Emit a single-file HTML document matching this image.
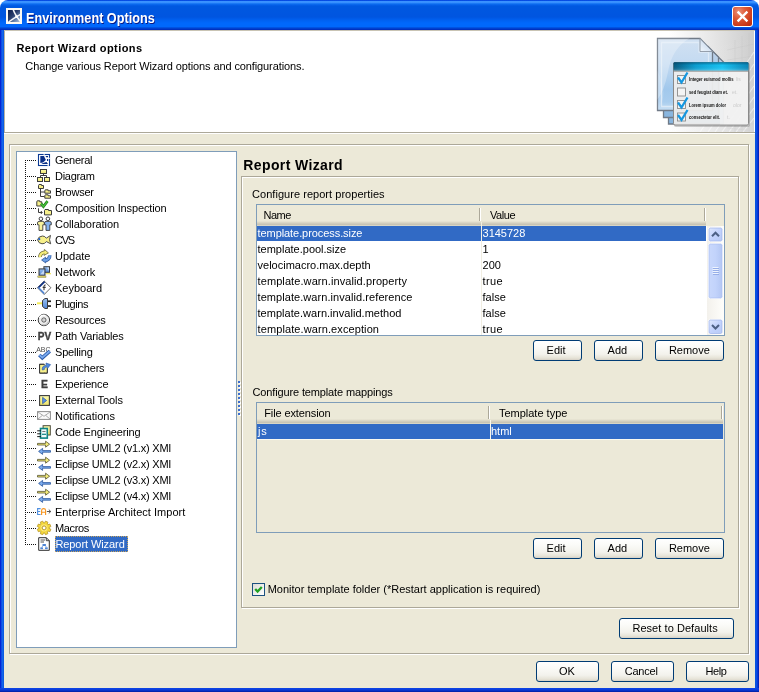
<!DOCTYPE html>
<html>
<head>
<meta charset="utf-8">
<title>Environment Options</title>
<style>
*{box-sizing:border-box;margin:0;padding:0}
html,body{width:759px;height:692px;overflow:hidden;background:#fff}
body{font-family:"Liberation Sans",sans-serif;font-size:11px;color:#000;position:relative}
.abs{position:absolute}
#win{position:absolute;left:0;top:0;width:759px;height:692px;overflow:hidden;will-change:transform}
.bl{position:absolute;top:30px;width:4px;height:662px}
#bb{position:absolute;left:0;top:688px;width:759px;height:4px;background:linear-gradient(to bottom,#0d46e6,#0a3ad8 50%,#001ea0 100%)}
#title{position:absolute;left:0;top:0;width:759px;height:30px;border-radius:8px 8px 0 0;
background:linear-gradient(to bottom,#0046e0 0,#0a50e6 0.8px,#3a92ff 1.4px,#3a92ff 2.4px,#1272f2 3.8px,#045fe8 5px,#0058e0 6.5px,#0055e0 17px,#0060f0 20px,#0068fc 23px,#0068fc 26.5px,#0048d6 28px,#0030c0 29.5px,#0030c0 30px)}
#ttext{position:absolute;left:26px;top:9.6px;color:#fff;font-weight:bold;font-size:14px;line-height:16px;text-shadow:1px 1px 0 #0a1883;white-space:nowrap;transform:scaleX(0.904);transform-origin:0 0}
#close{position:absolute;left:732px;top:6px;width:21px;height:21px;border:1px solid #fff;border-radius:3px;
background:radial-gradient(circle at 30% 25%,#e9917a 0%,#de5a37 35%,#c73314 80%,#b22a0c 100%)}
#client{position:absolute;left:4px;top:30px;width:751px;height:658px;background:#ece9d8}
#hdr{position:absolute;left:0;top:0;width:751px;height:102px;background:#fff}
#hsep{position:absolute;left:0;top:102px;width:751px;height:2px;background:linear-gradient(to bottom,#aca899 50%,#fff 50%)}
#hleft{position:absolute;left:0;top:0;width:751px;height:102px;border-left:1px solid #b5b2a4;border-top:1px solid #c9c4b4}
.t{position:absolute;white-space:nowrap;line-height:13px;font-size:11px}
.etch{position:absolute;border:1px solid #aca899;box-shadow:1px 1px 0 #fff, inset 1px 1px 0 #fff}
.btn{position:absolute;height:21px;border:1px solid #003c74;border-radius:3px;
background:linear-gradient(to bottom,#ffffff 0%,#fbfbf8 30%,#f3f2ec 70%,#e6e3d7 90%,#d6d0c5 100%)}
#tree{position:absolute;left:16px;top:151px;width:221px;height:497px;border:1px solid #7f9db9;background:#fff}
.ic{position:absolute;left:37px;width:16px;height:16px}
.hd{position:absolute;left:27px;width:10px;height:1px;background-image:linear-gradient(to right,#111 50%,transparent 50%);background-size:2px 1px}
#vd{position:absolute;left:25px;top:160px;width:1px;height:385px;background-image:linear-gradient(to bottom,#111 50%,transparent 50%);background-size:1px 2px}
.tbl{position:absolute;border:1px solid #7f9db9;overflow:hidden}
.th{position:absolute;top:0;height:21px;background:linear-gradient(to bottom,#ece9d8 0,#ece9d8 16px,#e0dccb 17px,#d6d2c2 18px,#cbc7b8 19px,#c5c2b2 20px,#ece9d8 21px)}
.hs{position:absolute;top:3px;width:2px;height:13px;border-left:1px solid #aca899;border-right:1px solid #fff}
.sel{position:absolute;background:#316ac5;height:15px}
</style>
</head>
<body>
<div id="win">
<div class="bl" style="left:0;background:linear-gradient(to right,#0019cf 0,#0831d9 25%,#166aee 50%,#0855dd 100%)"></div><div class="bl" style="left:755px;background:linear-gradient(to right,#0855dd 0,#0a4fe0 40%,#0831d9 70%,#001ea0 100%)"></div><div id="bb"></div>
<div id="title"></div>
<svg id="ticon" class="abs" style="left:6px;top:8px" width="16" height="16" viewBox="0 0 16 16"><defs><linearGradient id="tig" x1="0" y1="0" x2="1" y2="1"><stop offset="0" stop-color="#0b1a47"/><stop offset="0.45" stop-color="#2a3f6e"/><stop offset="0.75" stop-color="#6f8ab4"/><stop offset="1" stop-color="#a9bedb"/></linearGradient></defs><rect x="0" y="0" width="16" height="16" fill="#fbf8f2"/><rect x="2" y="2" width="12" height="12" fill="url(#tig)"/><path d="M7.2 1.5 Q9 7 14.5 13.5" stroke="#fff" stroke-width="1.5" fill="none" stroke-opacity="0.95"/><path d="M2.5 14 Q8 10 14.5 6.3" stroke="#fff" stroke-width="1.5" fill="none" stroke-opacity="0.95"/><circle cx="10.6" cy="8.6" r="1.3" fill="#fff"/></svg>
<div id="ttext">Environment Options</div>
<div id="close"><svg width="19" height="19" viewBox="0 0 19 19" style="position:absolute;left:0;top:0"><path d="M4.6 4.6 L14.4 14.4 M14.4 4.6 L4.6 14.4" stroke="#fff" stroke-width="2.3" stroke-linecap="butt"/></svg></div>
<div id="client"><div id="hdr"></div><div id="hleft"></div><div id="hsep"></div></div>
<svg class="abs" style="left:620px;top:30px" width="135" height="102" viewBox="620 30 135 102">
<defs>
<linearGradient id="bgg" x1="0" y1="0" x2="1" y2="0"><stop offset="0" stop-color="#fff"/><stop offset="0.25" stop-color="#fff"/><stop offset="0.6" stop-color="#e9e9e9"/><stop offset="1" stop-color="#cccccc"/></linearGradient>
<linearGradient id="bgv" x1="0" y1="0" x2="0" y2="1"><stop offset="0" stop-color="#fff" stop-opacity="0"/><stop offset="0.75" stop-color="#fff" stop-opacity="0.08"/><stop offset="1" stop-color="#fff" stop-opacity="0.2"/></linearGradient>
<linearGradient id="pg" x1="0" y1="0" x2="0" y2="1"><stop offset="0" stop-color="#d2e1f2"/><stop offset="0.35" stop-color="#c3daf1"/><stop offset="0.7" stop-color="#a1c8ec"/><stop offset="0.88" stop-color="#a9cdee"/><stop offset="1" stop-color="#c9e0f4"/></linearGradient>
<linearGradient id="pg2" x1="0" y1="0" x2="0" y2="1"><stop offset="0" stop-color="#c1d5ec"/><stop offset="1" stop-color="#86b4de"/></linearGradient>
<linearGradient id="cy" x1="0" y1="0" x2="1" y2="0"><stop offset="0" stop-color="#075a80"/><stop offset="0.3" stop-color="#0b9fd2"/><stop offset="0.65" stop-color="#19c4f4"/><stop offset="1" stop-color="#0a86b8"/></linearGradient>
<linearGradient id="cyv" x1="0" y1="0" x2="0" y2="1"><stop offset="0" stop-color="#003a5a" stop-opacity="0.55"/><stop offset="0.35" stop-color="#003a5a" stop-opacity="0"/><stop offset="0.8" stop-color="#fff" stop-opacity="0.1"/><stop offset="1" stop-color="#fff" stop-opacity="0.3"/></linearGradient>
<linearGradient id="fold" x1="0" y1="1" x2="1" y2="0"><stop offset="0" stop-color="#f2f7fc"/><stop offset="1" stop-color="#b5cde8"/></linearGradient>
<clipPath id="p1c"><path d="M657.5 38.5 H700 L712.5 51.5 V110.5 H657.5 Z"/></clipPath>
</defs>
<rect x="640" y="30" width="114" height="102" fill="url(#bgg)"/>
<g stroke="#fff" stroke-opacity="0.5" stroke-width="1.2">
<path d="M715 132 L754 75 M722 132 L754 86 M729 132 L754 97 M736 132 L754 108 M743 132 L754 118 M708 132 L754 64 M700 132 L754 52 M720 30 L754 30"/>
</g>
<g stroke="#c4c4c4" stroke-opacity="0.5" stroke-width="0.6">
<path d="M727 50 L754 44 M727 60 L754 56 M727 70 L754 68 M735 40 V132 M742 36 V132 M749 33 V132 M727 122 L754 124 M727 128 L754 131"/>
</g>
<rect x="640" y="30" width="114" height="102" fill="url(#bgv)"/>
<rect x="754" y="30" width="1" height="102" fill="#fff"/>
<!-- page 3 -->
<path d="M668.5 53 H714 L723.5 62 V124 H668.5 Z" fill="url(#pg2)" stroke="#707a87" stroke-width="1.3"/>
<!-- page 2 -->
<path d="M663.5 46.5 H708 L718.5 57 V117.5 H663.5 Z" fill="url(#pg2)" stroke="#707a87" stroke-width="1.3"/>
<!-- page 1 -->
<path d="M657.5 38.5 H700 L712.5 51.5 V110.5 H657.5 Z" fill="url(#pg)" stroke="#707a87" stroke-width="1.3"/>
<g clip-path="url(#p1c)">
<path d="M661.5 42.5 H699 V52 H708.5 V106.5 H661.5 Z" fill="none" stroke="#e4edf8" stroke-opacity="0.8" stroke-width="1.3"/>
<path d="M657 38 H690 Q672 48 668 72 Q664 92 657 100 Z" fill="#fff" fill-opacity="0.28"/>
<path d="M657 70 Q670 95 657 111 Z" fill="#fff" fill-opacity="0.15"/>
</g>
<path d="M700 38.5 L700 51.5 L712.5 51.5 Z" fill="url(#fold)" stroke="#8c96a3" stroke-width="0.9"/>
<!-- shadow of panel -->
<rect x="674" y="63" width="76" height="64" rx="2" fill="#444" fill-opacity="0.25"/>
<!-- panel -->
<rect x="673.5" y="62.5" width="75" height="62.5" rx="1.5" fill="#f1f1f1" fill-opacity="0.93" stroke="#8a8a8a" stroke-width="1"/>
<rect x="720" y="71" width="28" height="53.5" fill="#fff" fill-opacity="0.25"/>
<rect x="673.5" y="62.2" width="75" height="8.6" rx="1.2" fill="url(#cy)"/>
<rect x="673.5" y="62.2" width="75" height="8.6" rx="1.2" fill="url(#cyv)"/>
<path d="M673.5 71.2 H748.5" stroke="#7d7d7d" stroke-width="0.8"/>
<!-- checkboxes -->
<g fill="#f4f4f4" stroke="#8c8c8c" stroke-width="0.9">
<rect x="677.5" y="75.5" width="8" height="8"/><rect x="677.5" y="88" width="8" height="8"/><rect x="677.5" y="100.5" width="8" height="8"/><rect x="677.5" y="113" width="8" height="8"/>
</g>
<g fill="none" stroke="#1597e0" stroke-width="2.3" stroke-linejoin="miter">
<path d="M678 77.5 L681.5 82.5 L687.5 72.5"/><path d="M678 102.5 L681.5 107.5 L687.5 97.5"/><path d="M678 115 L681.5 120 L687.5 110"/>
</g>
<g font-family="Liberation Sans" font-weight="bold" font-size="5.2" fill="#111">
<text x="689" y="81.3" textLength="44.5" lengthAdjust="spacingAndGlyphs">Integer euismod mollis</text>
<text x="689" y="93.8" textLength="39" lengthAdjust="spacingAndGlyphs">sed feugiat diam et.</text>
<text x="689" y="106.5" textLength="37" lengthAdjust="spacingAndGlyphs">Lorem ipsum dolor</text>
<text x="689" y="119" textLength="31" lengthAdjust="spacingAndGlyphs">consectetur elit.</text>
</g>
<g font-family="Liberation Sans" font-size="5" fill="#bbb" fill-opacity="0.7">
<text x="736" y="81">lis</text><text x="732" y="94">et.</text><text x="733" y="106.5">olor</text><text x="727" y="119">t.</text>
</g>
</svg>
<div style="position:absolute;left:4px;top:30px;width:751px;height:1px;background:#c9c4b4"></div>
<div class="etch" style="left:9px;top:144px;width:740px;height:510px"></div>
<div id="tree"></div><div id="vd"></div>
<div class="hd" style="top:160px"></div><div class="ic" style="top:152px"><svg width="16" height="16" viewBox="0 0 16 16" style="overflow:visible;display:block"><defs><linearGradient id="yg" x1="0" y1="0" x2="0" y2="1"><stop offset="0" stop-color="#fffdb0"/><stop offset="1" stop-color="#ece26a"/></linearGradient><linearGradient id="bg2" x1="0" y1="0" x2="0" y2="1"><stop offset="0" stop-color="#9cc2f2"/><stop offset="1" stop-color="#4f86d6"/></linearGradient></defs><rect x="1.5" y="2.5" width="11" height="11" fill="#fff" stroke="#0c3a94" stroke-width="1.1"/><path d="M3.3 4 H7 L8.8 8 L6 10.5 L3.3 11 Z" fill="#0b2f86"/><path d="M8.5 4 H11 V5.2 H9.3 Z" fill="#0b2f86"/><path d="M5 11.5 Q8 10.3 9.5 10 L11 12 H4.5 Z" fill="#0b2f86"/><rect x="10" y="7" width="1.2" height="2" fill="#0b2f86"/><path d="M6.5 2 H7.8 M12 5.8 V7 M10.6 13.6 H11.8" stroke="#fff" stroke-width="1.6"/></svg></div>
<div class="hd" style="top:176px"></div><div class="ic" style="top:168px"><svg width="16" height="16" viewBox="0 0 16 16" style="overflow:visible;display:block"><path d="M6.5 6 V7.5 M3.5 9 V7.5 H9.5 V9" stroke="#3c3c3c" fill="none" stroke-width="1"/><rect x="3.5" y="1.5" width="6" height="4" fill="url(#yg)" stroke="#3c3c3c" stroke-width="1"/><rect x="0.5" y="9.5" width="5" height="4" fill="url(#yg)" stroke="#3c3c3c" stroke-width="1"/><rect x="7.5" y="9.5" width="5" height="4" fill="url(#yg)" stroke="#3c3c3c" stroke-width="1"/></svg></div>
<div class="hd" style="top:192px"></div><div class="ic" style="top:184px"><svg width="16" height="16" viewBox="0 0 16 16" style="overflow:visible;display:block"><path d="M3.5 5 V12.5 H7.5 M3.5 8 H7.5" stroke="#3c3c3c" fill="none" stroke-width="1"/><path d="M1.5 1.5 V4.5 H6.5 V1.5 H4.5 V0.5 H2 L1.5 1.5 Z" fill="#f7f08a" stroke="#3c3c3c" stroke-width="1"/><path d="M7.8 6.8 V9.2 H13.5 V6.8 H11.15 V5.8 H8.3 L7.8 6.8 Z" fill="#f7f08a" stroke="#3c3c3c" stroke-width="1"/><path d="M7.8 11.8 V14.200000000000001 H13.5 V11.8 H11.15 V10.8 H8.3 L7.8 11.8 Z" fill="#f7f08a" stroke="#3c3c3c" stroke-width="1"/></svg></div>
<div class="hd" style="top:208px"></div><div class="ic" style="top:200px"><svg width="16" height="16" viewBox="0 0 16 16" style="overflow:visible;display:block"><path d="M-0.19999999999999996 1.8 V6.0 H4.8 V1.8 H2.8 V0.8 H0.30000000000000004 L-0.19999999999999996 1.8 Z" fill="#f7f08a" stroke="#3c3c3c" stroke-width="1"/><path d="M4.1 3.6 L6.4 6.6 L10.5 1.1" stroke="#1f7a1a" stroke-width="2.6" fill="none"/><path d="M4.1 3.6 L6.4 6.6 L10.5 1.1" stroke="#46c23a" stroke-width="1.3" fill="none"/><path d="M1.5 8.3 V12.5 H5 M3.8 11 L5.3 12.5 L3.8 14" stroke="#3c3c3c" fill="none" stroke-width="1"/><path d="M7.5 10.5 V14.9 H14.5 V10.5 H11.5 V9.5 H8 L7.5 10.5 Z" fill="#f7f08a" stroke="#3c3c3c" stroke-width="1"/></svg></div>
<div class="hd" style="top:224px"></div><div class="ic" style="top:216px"><svg width="16" height="16" viewBox="0 0 16 16" style="overflow:visible;display:block"><circle cx="3.9" cy="2.8" r="1.8" fill="#fff" stroke="#3c3c3c" stroke-width="1"/><path d="M0.5 7 Q0.5 5.5 2 5.4 H5.8 Q7.3 5.5 7.3 7 V8.8 H5.8 V14.4 H2 V8.8 H0.5 Z" fill="#f8f29a" stroke="#3c3c3c" stroke-width="0.9"/><circle cx="10.9" cy="2.8" r="1.8" fill="#fff" stroke="#3c3c3c" stroke-width="1"/><path d="M7.5 7 Q7.5 5.5 9 5.4 H12.8 Q14.3 5.5 14.3 7 V8.8 H12.8 V14.4 H9 V8.8 H7.5 Z" fill="#86b4ee" stroke="#3c3c3c" stroke-width="0.9"/></svg></div>
<div class="hd" style="top:240px"></div><div class="ic" style="top:232px"><svg width="16" height="16" viewBox="0 0 16 16" style="overflow:visible;display:block"><path d="M0.5 7.8 Q1.5 4.2 5.5 4 Q8 4 9.3 6.2 L13.5 3.4 Q11.5 7.8 13.7 11.8 L9.3 9.6 Q8 12 5 11.8 Q1.5 11.5 0.5 7.8 Z" fill="#f7f08a" stroke="#3c3c3c" stroke-width="0.9"/><circle cx="2.3" cy="7.2" r="1.1" fill="#1f5fd0"/></svg></div>
<div class="hd" style="top:256px"></div><div class="ic" style="top:248px"><svg width="16" height="16" viewBox="0 0 16 16" style="overflow:visible;display:block"><path d="M3 9.2 A4.6 4.6 0 0 1 8 4.3" stroke="#6b673a" stroke-width="3.6" fill="none"/><path d="M7.4 1.4 L11.4 4.9 L7 7.4 Z" fill="#f5ee7a" stroke="#6b673a" stroke-width="0.8"/><path d="M3 9.2 A4.6 4.6 0 0 1 8 4.3" stroke="#f5ee7a" stroke-width="2.2" fill="none"/><path d="M12.7 7.4 A4.6 4.6 0 0 1 7.8 12.3" stroke="#2b569c" stroke-width="3.6" fill="none"/><path d="M8.6 9.2 L4.6 12 L8.8 15 Z" fill="#6da0e6" stroke="#2b569c" stroke-width="0.8"/><path d="M12.7 7.4 A4.6 4.6 0 0 1 7.8 12.3" stroke="#6da0e6" stroke-width="2.2" fill="none"/></svg></div>
<div class="hd" style="top:272px"></div><div class="ic" style="top:264px"><svg width="16" height="16" viewBox="0 0 16 16" style="overflow:visible;display:block"><rect x="6.9" y="2.7" width="5.6" height="5.6" fill="url(#bg2)" stroke="#3c3c3c" stroke-width="1"/><path d="M10 3.5 L12 3.5 L12 7 Z" fill="#fff" fill-opacity="0.6"/><rect x="9" y="9" width="5" height="1.3" fill="#f0e76a"/><rect x="2" y="4.9" width="6" height="6.3" fill="url(#bg2)" stroke="#3c3c3c" stroke-width="1"/><path d="M3 10.5 L7 6 L7.2 10.5 Z" fill="#fff" fill-opacity="0.6"/><rect x="0.8" y="12" width="8.2" height="1.5" fill="#f0e76a" stroke="#6b673a" stroke-width="0.4"/></svg></div>
<div class="hd" style="top:288px"></div><div class="ic" style="top:280px"><svg width="16" height="16" viewBox="0 0 16 16" style="overflow:visible;display:block"><path d="M7.2 1 L13.9 7.7 L7.2 14.5 L0.4 7.7 Z" fill="#fff" stroke="#555" stroke-width="0.9"/><path d="M0.4 7.7 L7.2 1 L8.2 2.2 L2.6 7.8 Z" fill="#0b2f86"/><path d="M0.4 7.7 L2.6 7.8 L7.4 12.5 L7.2 14.5 Z" fill="#4f86d6"/><path d="M8.6 5 Q7 4.6 7 6.3 V10.2 M5.6 7.3 H8.8" stroke="#222" stroke-width="1" fill="none"/></svg></div>
<div class="hd" style="top:304px"></div><div class="ic" style="top:296px"><svg width="16" height="16" viewBox="0 0 16 16" style="overflow:visible;display:block"><rect x="0" y="6.3" width="5.2" height="2" fill="#f3eb5a"/><path d="M5.5 4.5 L8 2.5 H10.5 V12.5 H8 L5.5 10.5 Z" fill="url(#bg2)" stroke="#3c3c3c" stroke-width="1"/><rect x="11" y="4.4" width="3" height="1.7" fill="#222"/><rect x="11" y="9.2" width="3" height="1.7" fill="#222"/></svg></div>
<div class="hd" style="top:320px"></div><div class="ic" style="top:312px"><svg width="16" height="16" viewBox="0 0 16 16" style="overflow:visible;display:block"><circle cx="6.9" cy="8" r="5.7" fill="#ececec" stroke="#3a3a3a" stroke-width="1"/><path d="M2.6 6 A4.6 4.6 0 0 1 8.5 3.6" stroke="#fff" stroke-width="1.6" fill="none"/><path d="M11.2 10 A4.6 4.6 0 0 1 5.3 12.4" stroke="#c4c4c4" stroke-width="1.4" fill="none"/><circle cx="6.9" cy="8" r="2.1" fill="#fff" stroke="#444" stroke-width="0.9"/><circle cx="6.9" cy="8" r="0.7" fill="#eee" stroke="#888" stroke-width="0.4"/></svg></div>
<div class="hd" style="top:336px"></div><div class="ic" style="top:328px"><svg width="16" height="16" viewBox="0 0 16 16" style="overflow:visible;display:block"><text x="0.8" y="11.6" font-family="Liberation Sans" font-weight="bold" font-size="10" fill="#3f3f3f" stroke="#3f3f3f" stroke-width="0.35" textLength="13.4" lengthAdjust="spacingAndGlyphs">PV</text></svg></div>
<div class="hd" style="top:352px"></div><div class="ic" style="top:344px"><svg width="16" height="16" viewBox="0 0 16 16" style="overflow:visible;display:block"><text x="-0.8" y="7.5" font-family="Liberation Sans" font-size="7" fill="#4a4a4a" textLength="14.3" lengthAdjust="spacingAndGlyphs">ABC</text><path d="M2.3 11 L5.3 13.8 L12.8 7.2" stroke="#2c5aa8" stroke-width="3.6" fill="none"/><path d="M2.5 11 L5.3 13.6 L12.6 7.2" stroke="#79aaf0" stroke-width="1.8" fill="none"/></svg></div>
<div class="hd" style="top:368px"></div><div class="ic" style="top:360px"><svg width="16" height="16" viewBox="0 0 16 16" style="overflow:visible;display:block"><path d="M2.6 4.3 H7.5 V13.1 H2.6 Z M7.5 8 H10.3 V13.1 H7.5" fill="#f7f08a" stroke="#3c3c3c" stroke-width="1"/><rect x="3.1" y="4.8" width="6.7" height="7.8" fill="#f7f08a"/><path d="M2.6 4.3 H7 M10.3 8.5 V13.1 H2.6 V4.3" fill="none" stroke="#3c3c3c" stroke-width="1"/><path d="M5.3 10 Q4.6 5.6 9.3 5.2 L9 3 L13.6 4.6 L10.6 8.4 L10 6.8 Q7.2 7 7.3 9.6 Z" fill="#4f8ae0" stroke="#2a55a0" stroke-width="0.6"/></svg></div>
<div class="hd" style="top:384px"></div><div class="ic" style="top:376px"><svg width="16" height="16" viewBox="0 0 16 16" style="overflow:visible;display:block"><text x="3.9" y="11.7" font-family="Liberation Sans" font-weight="bold" font-size="10.4" fill="#3f3f3f" stroke="#3f3f3f" stroke-width="0.3">E</text></svg></div>
<div class="hd" style="top:400px"></div><div class="ic" style="top:392px"><svg width="16" height="16" viewBox="0 0 16 16" style="overflow:visible;display:block"><rect x="2.6" y="3.6" width="9.8" height="9.8" fill="url(#yg)" stroke="#3c3c3c" stroke-width="1.1"/><path d="M5.6 5.3 L9.6 8.5 L5.6 11.7 Z" fill="#5b93e4" stroke="#2a55a0" stroke-width="0.7"/></svg></div>
<div class="hd" style="top:416px"></div><div class="ic" style="top:408px"><svg width="16" height="16" viewBox="0 0 16 16" style="overflow:visible;display:block"><rect x="0.6" y="3.6" width="12.8" height="7.8" fill="#fafafa" stroke="#8c8c8c" stroke-width="1"/><path d="M1 4 L7 8.3 L13 4 M1 11 L5.4 7.3 M13 11 L8.6 7.3" stroke="#a2a2a2" stroke-width="0.9" fill="none"/></svg></div>
<div class="hd" style="top:432px"></div><div class="ic" style="top:424px"><svg width="16" height="16" viewBox="0 0 16 16" style="overflow:visible;display:block"><rect x="6.1" y="1.7" width="7.2" height="9.3" fill="url(#yg)" stroke="#4a4a3a" stroke-width="1"/><rect x="8" y="4" width="3.5" height="4" fill="#fbf7b5"/><rect x="3.5" y="4.5" width="6.8" height="9.6" fill="#f2fbfb" stroke="#0e8585" stroke-width="1.6"/><path d="M5.3 7.5 H8.5" stroke="#777" stroke-width="1"/><path d="M5 10.3 H9" stroke="#0e8585" stroke-width="1.2"/><path d="M0.2 6.8 H4 M0.2 9.8 H4 M0.2 12.6 H4" stroke="#1a1a1a" stroke-width="1"/></svg></div>
<div class="hd" style="top:448px"></div><div class="ic" style="top:440px"><svg width="16" height="16" viewBox="0 0 16 16" style="overflow:visible;display:block"><path d="M0.5 3.4 H8.6 V1.2 L12.6 4.2 L8.6 7.2 V5 H0.5 Z" fill="#f5ee7a" stroke="#55522e" stroke-width="0.8"/><path d="M13.5 10.6 H5.6 V8.4 L1.6 11.4 L5.6 14.4 V12.2 H13.5 Z" fill="#7aabee" stroke="#2b569c" stroke-width="0.8"/></svg></div>
<div class="hd" style="top:464px"></div><div class="ic" style="top:456px"><svg width="16" height="16" viewBox="0 0 16 16" style="overflow:visible;display:block"><path d="M0.5 3.4 H8.6 V1.2 L12.6 4.2 L8.6 7.2 V5 H0.5 Z" fill="#f5ee7a" stroke="#55522e" stroke-width="0.8"/><path d="M13.5 10.6 H5.6 V8.4 L1.6 11.4 L5.6 14.4 V12.2 H13.5 Z" fill="#7aabee" stroke="#2b569c" stroke-width="0.8"/></svg></div>
<div class="hd" style="top:480px"></div><div class="ic" style="top:472px"><svg width="16" height="16" viewBox="0 0 16 16" style="overflow:visible;display:block"><path d="M0.5 3.4 H8.6 V1.2 L12.6 4.2 L8.6 7.2 V5 H0.5 Z" fill="#f5ee7a" stroke="#55522e" stroke-width="0.8"/><path d="M13.5 10.6 H5.6 V8.4 L1.6 11.4 L5.6 14.4 V12.2 H13.5 Z" fill="#7aabee" stroke="#2b569c" stroke-width="0.8"/></svg></div>
<div class="hd" style="top:496px"></div><div class="ic" style="top:488px"><svg width="16" height="16" viewBox="0 0 16 16" style="overflow:visible;display:block"><path d="M0.5 3.4 H8.6 V1.2 L12.6 4.2 L8.6 7.2 V5 H0.5 Z" fill="#f5ee7a" stroke="#55522e" stroke-width="0.8"/><path d="M13.5 10.6 H5.6 V8.4 L1.6 11.4 L5.6 14.4 V12.2 H13.5 Z" fill="#7aabee" stroke="#2b569c" stroke-width="0.8"/></svg></div>
<div class="hd" style="top:512px"></div><div class="ic" style="top:504px"><svg width="16" height="16" viewBox="0 0 16 16" style="overflow:visible;display:block"><path d="M3.6 4.6 H0.6 V10.5 H3.6 M0.6 7.5 H3.2" stroke="#4f8fe0" stroke-width="1.1" fill="none"/><path d="M4.6 11 V6.4 Q4.6 4.6 6.6 4.6 Q8.6 4.6 8.6 6.4 V11 M4.6 8.2 H8.6" stroke="#f7941d" stroke-width="1.1" fill="none"/><path d="M9.9 7.5 H13.6 M11.8 5.6 L13.8 7.5 L11.8 9.4" stroke="#444" stroke-width="0.9" fill="none"/></svg></div>
<div class="hd" style="top:528px"></div><div class="ic" style="top:520px"><svg width="16" height="16" viewBox="0 0 16 16" style="overflow:visible;display:block"><path d="M13.86 9.29 L12.86 11.70 L10.95 11.09 L10.29 11.75 L10.90 13.66 L8.49 14.66 L7.56 12.88 L6.64 12.88 L5.71 14.66 L3.30 13.66 L3.91 11.75 L3.25 11.09 L1.34 11.70 L0.34 9.29 L2.12 8.36 L2.12 7.44 L0.34 6.51 L1.34 4.10 L3.25 4.71 L3.91 4.05 L3.30 2.14 L5.71 1.14 L6.64 2.92 L7.56 2.92 L8.49 1.14 L10.90 2.14 L10.29 4.05 L10.95 4.71 L12.86 4.10 L13.86 6.51 L12.08 7.44 L12.08 8.36 Z" fill="#f5d93c" stroke="#b8962a" stroke-width="0.8"/><circle cx="7.1" cy="7.9" r="3.1" fill="none" stroke="#fbe98a" stroke-width="1"/><circle cx="7.1" cy="7.9" r="1.9" fill="#fff" stroke="#a98a24" stroke-width="0.8"/></svg></div>
<div class="hd" style="top:544px"></div><div class="ic" style="top:536px"><svg width="16" height="16" viewBox="0 0 16 16" style="overflow:visible;display:block"><path d="M1.7 1.7 H9.3 L12.3 4.7 V14.3 H1.7 Z" fill="#fff" stroke="#2e2e2e" stroke-width="1"/><path d="M9.3 1.7 V4.7 H12.3" fill="none" stroke="#2e2e2e" stroke-width="0.9"/><path d="M3.5 4 H8 M3.5 6 H7" stroke="#555" stroke-width="1"/><rect x="5.5" y="8" width="3.4" height="2" fill="#4f86d6"/><rect x="3.3" y="11.4" width="2.7" height="1.7" fill="#4f86d6"/><rect x="8" y="11.4" width="2.7" height="1.7" fill="#4f86d6"/><path d="M5.8 10 L4.6 11.4 M8.6 10 L9.6 11.4" stroke="#4f86d6" stroke-width="0.7" fill="none"/></svg></div>
<div style="position:absolute;left:55px;top:536px;width:73px;height:16px;background:#316ac5;border:1px dotted #c9a45c"></div>
<div style="position:absolute;left:239px;top:382px;width:2px;height:2px;background:#fff"></div><div style="position:absolute;left:238px;top:381px;width:2px;height:2px;background:#3c6ecf"></div><div style="position:absolute;left:239px;top:386px;width:2px;height:2px;background:#fff"></div><div style="position:absolute;left:238px;top:385px;width:2px;height:2px;background:#3c6ecf"></div><div style="position:absolute;left:239px;top:390px;width:2px;height:2px;background:#fff"></div><div style="position:absolute;left:238px;top:389px;width:2px;height:2px;background:#3c6ecf"></div><div style="position:absolute;left:239px;top:394px;width:2px;height:2px;background:#fff"></div><div style="position:absolute;left:238px;top:393px;width:2px;height:2px;background:#3c6ecf"></div><div style="position:absolute;left:239px;top:398px;width:2px;height:2px;background:#fff"></div><div style="position:absolute;left:238px;top:397px;width:2px;height:2px;background:#3c6ecf"></div><div style="position:absolute;left:239px;top:402px;width:2px;height:2px;background:#fff"></div><div style="position:absolute;left:238px;top:401px;width:2px;height:2px;background:#3c6ecf"></div><div style="position:absolute;left:239px;top:406px;width:2px;height:2px;background:#fff"></div><div style="position:absolute;left:238px;top:405px;width:2px;height:2px;background:#3c6ecf"></div><div style="position:absolute;left:239px;top:410px;width:2px;height:2px;background:#fff"></div><div style="position:absolute;left:238px;top:409px;width:2px;height:2px;background:#3c6ecf"></div><div style="position:absolute;left:239px;top:414px;width:2px;height:2px;background:#fff"></div><div style="position:absolute;left:238px;top:413px;width:2px;height:2px;background:#3c6ecf"></div>
<div class="etch" style="left:241px;top:176px;width:498px;height:432px"></div>
<div class="tbl" style="left:256px;top:204px;width:469px;height:132px;background:#fff">
<div class="th" style="left:0;width:449px"></div><div class="th" style="left:449px;width:19px;background:#ece9d8"></div>
<div class="hs" style="left:222px"></div><div class="hs" style="left:447px"></div>
<div style="position:absolute;left:224px;top:17px;width:1px;height:120px;background:#f1eee2"></div>
<div class="sel" style="left:0;top:21px;width:224px"></div><div class="sel" style="left:225px;top:21px;width:224px"></div>
<div style="position:absolute;left:450px;top:21px;width:17px;height:110px;background:linear-gradient(to right,#f3f1ec,#fefefb)"></div>
<svg style="position:absolute;left:450px;top:21px" width="17" height="110" viewBox="0 0 17 110">
<defs><linearGradient id="sbg" x1="0" y1="0" x2="1" y2="0"><stop offset="0" stop-color="#c9d8fc"/><stop offset="0.5" stop-color="#c2d3fb"/><stop offset="1" stop-color="#b3c6f3"/></linearGradient>
<linearGradient id="sbb" x1="0" y1="0" x2="1" y2="1"><stop offset="0" stop-color="#e1eafe"/><stop offset="0.5" stop-color="#c3d3fd"/><stop offset="1" stop-color="#b7caf5"/></linearGradient></defs>
<rect x="1.5" y="1.5" width="14" height="14" rx="2" fill="url(#sbb)" stroke="#fff" stroke-width="1"/>
<rect x="2" y="2" width="13" height="13" rx="1.5" fill="none" stroke="#9db2e8" stroke-width="0.7"/>
<path d="M5 10.2 L8.5 6.7 L12 10.2" stroke="#4d6185" stroke-width="2" fill="none"/>
<rect x="1.5" y="17.5" width="14" height="55" rx="2" fill="url(#sbg)" stroke="#fff" stroke-width="1"/>
<rect x="2" y="18" width="13" height="54" rx="1.5" fill="none" stroke="#a9bdf0" stroke-width="0.7"/>
<path d="M5.5 41.5 H11.5 M5.5 43.5 H11.5 M5.5 45.5 H11.5 M5.5 47.5 H11.5" stroke="#eef4fe" stroke-width="1"/>
<path d="M6 42.5 H12 M6 44.5 H12 M6 46.5 H12 M6 48.5 H12" stroke="#8ca5e3" stroke-width="0.8"/>
<rect x="1.5" y="93.5" width="14" height="14.5" rx="2" fill="url(#sbb)" stroke="#fff" stroke-width="1"/>
<rect x="2" y="94" width="13" height="13.5" rx="1.5" fill="none" stroke="#9db2e8" stroke-width="0.7"/>
<path d="M5 99 L8.5 102.5 L12 99" stroke="#4d6185" stroke-width="2" fill="none"/>
</svg>
</div>
<div class="tbl" style="left:256px;top:402px;width:469px;height:131px;background:#ece9d8">
<div class="th" style="left:0;width:466px"></div>
<div class="hs" style="left:231px"></div><div class="hs" style="left:464px"></div>
<div style="position:absolute;left:233px;top:17px;width:1px;height:20px;background:#f8f5ea"></div><div style="position:absolute;left:0;top:36px;width:466px;height:1px;background:#fbf9f0"></div>
<div class="sel" style="left:0;top:21px;width:233px"></div><div class="sel" style="left:234px;top:21px;width:232px"></div>
</div>
<div class="btn" style="left:533px;top:340px;width:49px"></div><div class="btn" style="left:594px;top:340px;width:49px"></div><div class="btn" style="left:655px;top:340px;width:69px"></div>
<div class="btn" style="left:533px;top:538px;width:49px"></div><div class="btn" style="left:594px;top:538px;width:49px"></div><div class="btn" style="left:655px;top:538px;width:69px"></div>
<div class="btn" style="left:619px;top:618px;width:115px"></div><div class="btn" style="left:536px;top:661px;width:63px"></div><div class="btn" style="left:611px;top:661px;width:63px"></div><div class="btn" style="left:686px;top:661px;width:63px"></div>
<div id="cb" style="position:absolute;left:252px;top:583px;width:13px;height:13px;border:1px solid #1c5180;background:linear-gradient(135deg,#dcdcd7,#fff)"><svg width="11" height="11" viewBox="0 0 11 11" style="position:absolute;left:0;top:0"><path d="M2.2 5 L4.6 7.6 L8.8 3" stroke="#21a121" stroke-width="2.3" fill="none"/></svg></div>
<div class="t" style="left:55.00px;top:152px;letter-spacing:-0.285px;line-height:16px">General</div>
<div class="t" style="left:55.00px;top:168px;letter-spacing:-0.285px;line-height:16px">Diagram</div>
<div class="t" style="left:55.00px;top:184px;letter-spacing:-0.225px;line-height:16px">Browser</div>
<div class="t" style="left:55.00px;top:200px;letter-spacing:-0.129px;line-height:16px">Composition Inspection</div>
<div class="t" style="left:55.00px;top:216px;letter-spacing:-0.060px;line-height:16px">Collaboration</div>
<div class="t" style="left:55.00px;top:232px;letter-spacing:-1.215px;line-height:16px">CVS</div>
<div class="t" style="left:55.00px;top:248px;letter-spacing:0.000px;line-height:16px">Update</div>
<div class="t" style="left:55.00px;top:264px;letter-spacing:0.000px;line-height:16px">Network</div>
<div class="t" style="left:55.00px;top:280px;letter-spacing:0.000px;line-height:16px">Keyboard</div>
<div class="t" style="left:55.00px;top:296px;letter-spacing:-0.450px;line-height:16px">Plugins</div>
<div class="t" style="left:55.00px;top:312px;letter-spacing:-0.225px;line-height:16px">Resources</div>
<div class="t" style="left:55.00px;top:328px;letter-spacing:-0.145px;line-height:16px">Path Variables</div>
<div class="t" style="left:55.00px;top:344px;letter-spacing:-0.193px;line-height:16px">Spelling</div>
<div class="t" style="left:55.00px;top:360px;letter-spacing:-0.225px;line-height:16px">Launchers</div>
<div class="t" style="left:55.00px;top:376px;letter-spacing:-0.170px;line-height:16px">Experience</div>
<div class="t" style="left:55.00px;top:392px;letter-spacing:-0.076px;line-height:16px">External Tools</div>
<div class="t" style="left:55.00px;top:408px;letter-spacing:0.000px;line-height:16px">Notifications</div>
<div class="t" style="left:55.00px;top:424px;letter-spacing:-0.162px;line-height:16px">Code Engineering</div>
<div class="t" style="left:55.00px;top:440px;letter-spacing:-0.209px;line-height:16px">Eclipse UML2 (v1.x) XMI</div>
<div class="t" style="left:55.00px;top:456px;letter-spacing:-0.209px;line-height:16px">Eclipse UML2 (v2.x) XMI</div>
<div class="t" style="left:55.00px;top:472px;letter-spacing:-0.209px;line-height:16px">Eclipse UML2 (v3.x) XMI</div>
<div class="t" style="left:55.00px;top:488px;letter-spacing:-0.209px;line-height:16px">Eclipse UML2 (v4.x) XMI</div>
<div class="t" style="left:55.00px;top:504px;letter-spacing:0.028px;line-height:16px">Enterprise Architect Import</div>
<div class="t" style="left:55.00px;top:520px;letter-spacing:-0.360px;line-height:16px">Macros</div>
<div class="t" style="left:55.40px;top:536px;letter-spacing:-0.075px;line-height:16px;color:#fff">Report Wizard</div>
<div class="t" style="left:16.40px;top:42px;letter-spacing:0.423px;font-weight:bold">Report Wizard options</div>
<div class="t" style="left:25.30px;top:60px;letter-spacing:-0.105px;">Change various Report Wizard options and configurations.</div>
<div class="t" style="left:243.30px;top:156px;letter-spacing:0.382px;font-weight:bold;font-size:14px;line-height:18px">Report Wizard</div>
<div class="t" style="left:252.00px;top:188px;letter-spacing:0.042px;">Configure report properties</div>
<div class="t" style="left:252.50px;top:386px;letter-spacing:-0.135px;">Configure template mappings</div>
<div class="t" style="left:263.40px;top:209px;letter-spacing:-0.420px;">Name</div>
<div class="t" style="left:489.90px;top:209px;letter-spacing:-0.405px;">Value</div>
<div class="t" style="left:264.20px;top:407px;letter-spacing:-0.111px;">File extension</div>
<div class="t" style="left:498.90px;top:407px;letter-spacing:0.000px;">Template type</div>
<div class="t" style="left:257.52px;top:227px;letter-spacing:-0.072px;color:#fff">template.process.size</div>
<div class="t" style="left:482.52px;top:227px;letter-spacing:0.000px;color:#fff">3145728</div>
<div class="t" style="left:257.52px;top:243px;letter-spacing:0.000px;">template.pool.size</div>
<div class="t" style="left:482.40px;top:243px;letter-spacing:0.000px;">1</div>
<div class="t" style="left:257.52px;top:259px;letter-spacing:0.000px;">velocimacro.max.depth</div>
<div class="t" style="left:482.52px;top:259px;letter-spacing:0.000px;">200</div>
<div class="t" style="left:257.52px;top:275px;letter-spacing:0.093px;">template.warn.invalid.property</div>
<div class="t" style="left:482.52px;top:275px;letter-spacing:0.420px;">true</div>
<div class="t" style="left:257.52px;top:291px;letter-spacing:0.066px;">template.warn.invalid.reference</div>
<div class="t" style="left:482.52px;top:291px;letter-spacing:0.000px;">false</div>
<div class="t" style="left:257.52px;top:307px;letter-spacing:0.033px;">template.warn.invalid.method</div>
<div class="t" style="left:482.52px;top:307px;letter-spacing:0.000px;">false</div>
<div class="t" style="left:257.52px;top:323px;letter-spacing:0.102px;">template.warn.exception</div>
<div class="t" style="left:482.52px;top:323px;letter-spacing:0.420px;">true</div>
<div class="t" style="left:257.90px;top:425px;letter-spacing:0.900px;color:#fff">js</div>
<div class="t" style="left:491.00px;top:425px;letter-spacing:0.000px;color:#fff">html</div>
<div class="t" style="left:267.70px;top:583px;letter-spacing:0.000px;">Monitor template folder (*Restart application is required)</div>
<div class="t" style="left:546.60px;top:344px;letter-spacing:0.000px;">Edit</div>
<div class="t" style="left:607.60px;top:344px;letter-spacing:0.000px;">Add</div>
<div class="t" style="left:668.90px;top:344px;letter-spacing:0.000px;">Remove</div>
<div class="t" style="left:546.60px;top:542px;letter-spacing:0.000px;">Edit</div>
<div class="t" style="left:607.60px;top:542px;letter-spacing:0.000px;">Add</div>
<div class="t" style="left:668.90px;top:542px;letter-spacing:0.000px;">Remove</div>
<div class="t" style="left:632.40px;top:622px;letter-spacing:0.056px;">Reset to Defaults</div>
<div class="t" style="left:559.00px;top:665px;letter-spacing:0.000px;">OK</div>
<div class="t" style="left:624.70px;top:665px;letter-spacing:-0.198px;">Cancel</div>
<div class="t" style="left:705.50px;top:665px;letter-spacing:-0.420px;">Help</div>
</div>
</body>
</html>
